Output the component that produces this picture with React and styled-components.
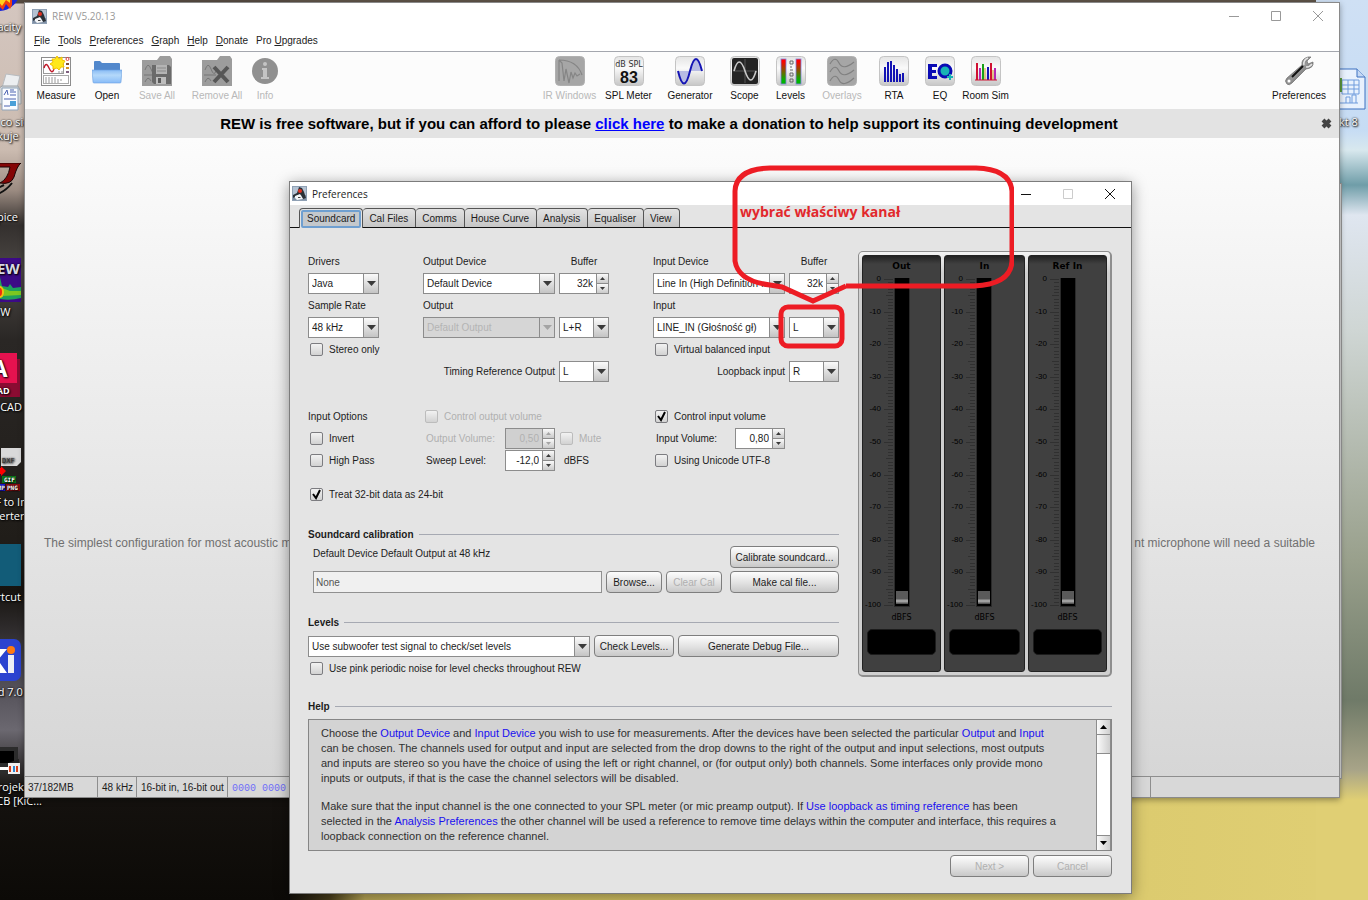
import React from 'react';
import styled, { createGlobalStyle } from 'styled-components';

const ICONS = ['Audacity', 'Drukarka', 'LTspice', 'REW', 'AutoCAD', 'DXF', 'Shortcut', 'KiCad', 'Projekt'];

const LABELS = {
  Audacity: ['Audacity'],
  Drukarka: ['Patrz, co się', 'drukuje'],
  LTspice: ['LTspice'],
  REW: ['REW'],
  AutoCAD: ['AutoCAD'],
  DXF: ['Acme DXF to Image', 'Converter'],
  Shortcut: ['Shortcut'],
  KiCad: ['KiCad 7.0'],
  Projekt: ['Nowy projektor', 'płytka PCB [KiC...'],
};

const TABS = ['Soundcard', 'Cal Files', 'Comms', 'House Curve', 'Analysis', 'Equaliser', 'View'];

function JavaIcon() {
  return (
    <svg width="15" height="15" viewBox="0 0 15 15" aria-hidden="true">
      <rect width="15" height="15" fill="#b4c2d2" />
      <rect y="9" width="15" height="6" fill="#7f8fa4" />
      <path d="M7 1 L10 2 L12 6 L14 12 L11 13 L9 9 L4 10 L1 12 L1 9 L5 7 Z" fill="#2b3036" />
      <path d="M3 10 L8 8 L11 13 L5 14 L3 12 Z" fill="#f4f6f8" />
      <path d="M6 11 L9 11 L8 12 L6 12 Z" fill="#444" />
      <circle cx="8" cy="5" r="2" fill="#e03020" />
      <rect x="0.5" y="0.5" width="14" height="14" fill="none" stroke="#8fa0b4" />
    </svg>
  );
}

function DesktopIcon({ name }) {
  return (
    <svg width="46" height="44" viewBox="0 0 46 44" aria-hidden="true">
      {name === 'Audacity' && <>
        <circle cx="23" cy="17" r="21" fill="#1a26d8" />
        <path d="M6 10 H36 V32 L34 36 L30 31 L27 37 L22 32 L14 37 Z" fill="#f2400e" />
        <path d="M10 10 H34 V30 L30 27 L26 33 L22 28 Z" fill="#ffd21c" />
      </>}
      {name === 'Drukarka' && <>
        <path d="M26 20 L30 6 L44 8 L40 24 Z" fill="#eceef0" stroke="#b8bcc0" />
        <path d="M18 24 L26 18 H42 L45 24 V36 H18 Z" fill="#d4d7da" stroke="#9aa0a4" />
        <path d="M26 20 H42 V42 H26 Z" fill="#fafcff" stroke="#8fa3b8" />
        <path d="M28 27 L31 22 L32 27 M34 22 H38 M34 24 H40 M34 27 H40 M28 31 H40 M28 38 H34" stroke="#4a62b0" fill="none" />
        <rect x="34" y="33" width="6" height="5" fill="#4aa0d8" />
      </>}
      {name === 'LTspice' && <>
        <path d="M20 0 H45 Q41 3 38 14 Q35 22 24 20 Q32 16 34 4 H20 Z" fill="#840505" stroke="#1a0505" />
        <path d="M18 32 Q28 30 36 20 M20 26 L28 22" stroke="#111" strokeWidth="2" fill="none" />
      </>}
      {name === 'REW' && <>
        <rect width="45" height="44" fill="#3c0a86" />
        <text x="11" y="16" fontFamily="Open Sans, sans-serif" fontWeight="700" fontSize="15" fill="#d8d8e4">REW</text>
        <path d="M0 32 L14 31 L20 24 L23 15 L26 28 L32 29 L34 26 L37 30 L45 29 V40 Q34 43 24 41 L0 40 Z" fill="#1fa05c" />
        <path d="M18 34 L22 24 L26 30 L34 33 L45 33 V37 L26 38 H18 Z" fill="#7cc820" />
        <ellipse cx="24" cy="34" rx="4" ry="6" fill="#f0c010" />
        <ellipse cx="24" cy="34" rx="2" ry="4" fill="#f02c10" />
      </>}
      {name === 'AutoCAD' && <>
        <rect x="4" y="6" width="40" height="38" fill="#8a0c32" />
        <rect x="2" y="0" width="39" height="30" fill="#e5124f" />
        <text x="15" y="24" fontFamily="Open Sans, sans-serif" fontWeight="700" fontSize="24" fill="#fff">A</text>
        <text x="15" y="41" fontFamily="Open Sans, sans-serif" fontWeight="700" fontSize="9" fill="#fff">CAD</text>
      </>}
      {name === 'DXF' && <>
        <path d="M25 0 H45 V14 L41 18 H25 Z" fill="#d9d9d9" />
        <text x="26" y="15" fontFamily="DejaVu Sans Mono, monospace" fontSize="7" fill="#333">DXF</text>
        <path d="M20 20 H25 V18 L30 23 L25 28 V26 H20 Z" fill="#f00" />
        <rect x="26" y="28" width="14" height="7" fill="#0a7a1a" />
        <text x="28" y="34" fontFamily="DejaVu Sans Mono, monospace" fontWeight="700" fontSize="6" fill="#fff">GIF</text>
        <rect x="12" y="36" width="17" height="7" fill="#1a1ae0" />
        <rect x="30" y="36" width="14" height="7" fill="#8a0c10" />
        <text x="18" y="42" fontFamily="DejaVu Sans Mono, monospace" fontWeight="700" fontSize="6" fill="#fff">BMP</text>
        <text x="31" y="42" fontFamily="DejaVu Sans Mono, monospace" fontWeight="700" fontSize="6" fill="#fff">PNG</text>
      </>}
      {name === 'Shortcut' && <rect y="1" width="45" height="42" fill="#125c78" />}
      {name === 'KiCad' && <>
        <rect y="1" width="45" height="42" rx="7" fill="#2b43d0" />
        <path d="M8 11 H15 V21 L23 11 H31 L22 22 L31 35 H23 L15 24 V35 H8 Z" fill="#fff" />
        <rect x="32" y="17" width="6" height="18" fill="#eceef4" />
        <circle cx="35" cy="12" r="4" fill="#ff7a10" />
      </>}
      {name === 'Projekt' && <>
        <rect y="14" width="42" height="26" fill="#2c2c2c" />
        <rect y="18" width="38" height="12" fill="#000" />
        <rect y="34" width="34" height="3" fill="#fff" />
        <rect x="32" y="30" width="12" height="11" fill="#f0f0f0" />
        <path d="M32 30 L43 26 V30 Z" fill="#222" />
        <path d="M34 33 V39 M41 33 V39" stroke="#d8401c" strokeWidth="2" />
        <path d="M38 33 V39" stroke="#2c86d0" strokeWidth="2" />
      </>}
      {name === 'Sheet' && <>
        <path d="M1 1 H37 L45 9 V41 H1 Z" fill="#e8f1fd" stroke="#3c70c0" />
        <path d="M37 1 V9 H45" fill="#c4d8f4" stroke="#3c70c0" />
        <path d="M22 12 H39 V26 H22 Z M22 17 H39 M22 21 H39 M28 12 V26 M34 12 V26 M20 35 H38 M26 35 V29 H30 V35 M32 35 V27 H36 V35" fill="none" stroke="#6f9bdc" />
        <rect x="16" y="10" width="6" height="14" fill="#5c9a40" />
      </>}
    </svg>
  );
}

function ToolIcon({ name }) {
  return (
    <svg width="30" height="30" viewBox="0 0 30 30" aria-hidden="true">
      <defs>
        <linearGradient id="tile" x1="0" y1="0" x2="0" y2="1">
          <stop offset="0" stopColor="#e4e4e4" />
          <stop offset="0.4" stopColor="#fafafa" />
          <stop offset="1" stopColor="#c6c6c6" />
        </linearGradient>
        <linearGradient id="folder" x1="0" y1="0" x2="0" y2="1">
          <stop offset="0" stopColor="#8abcf4" />
          <stop offset="0.4" stopColor="#b4d8fa" />
          <stop offset="1" stopColor="#88bcf8" />
        </linearGradient>
        <linearGradient id="meter" x1="0" y1="0" x2="0" y2="1">
          <stop offset="0.1" stopColor="#f00" />
          <stop offset="0.85" stopColor="#00b400" />
        </linearGradient>
        <linearGradient id="steel" x1="0" y1="0" x2="1" y2="1">
          <stop offset="0" stopColor="#333" />
          <stop offset="0.5" stopColor="#9a9a9a" />
          <stop offset="1" stopColor="#222" />
        </linearGradient>
      </defs>
      {['SPL Meter', 'Generator', 'Scope', 'Levels', 'RTA', 'EQ', 'Room Sim'].includes(name)
        && <rect x="0.5" y="0.5" width="29" height="29" rx="4" fill="url(#tile)" stroke="#c4c4c4" />}
      {['IR Windows', 'Overlays'].includes(name)
        && <rect x="0.5" y="0.5" width="29" height="29" rx="4" fill="#a6a6a6" stroke="#b0b0b0" />}
      {name === 'Measure' && <>
        <rect x="0.5" y="1.5" width="29" height="28" fill="#fff" stroke="#8c8c8c" />
        <rect x="2.5" y="4.5" width="20" height="13" fill="#fff" stroke="#999" />
        <rect x="2.5" y="19.5" width="25" height="8" fill="#fff" stroke="#aaa" />
        <path d="M3 12 Q5 5 8 12 T13 13" fill="none" stroke="#c01828" strokeWidth="1.4" />
        <path d="M4 22 H16 M4 24 H22 M4 26 H18 M17 16 H22" stroke="#999" strokeDasharray="2 1" />
        <circle cx="26.500" cy="3" r="1.500" fill="none" stroke="#e04040" />
        <path d="M25 8 H28" stroke="#805030" strokeWidth="2" />
        <path d="M25 12 H28" stroke="#d89020" strokeWidth="2" />
        <path d="M25 16 H28" stroke="#806080" strokeWidth="2" />
        <path d="M16 0 L18 3 L21 1 L21 4 L24 5 L22 8 L23 11 L20 11 L18 14 L16 12 L12 13 L12 10 L9 8 L12 6 L11 3 L14 3 Z" fill="#ffe81a" stroke="#f2c000" />
      </>}
      {name === 'Open' && <>
        <path d="M2 14 V6 Q2 5 3 5 H8 L10 7 H27 Q28 7 28 8 V14 Z" fill="#5288cc" />
        <path d="M0 14 H30 L29 26 Q29 27 28 27 H2 Q1 27 1 26 Z" fill="url(#folder)" stroke="#6aa0e0" strokeWidth="0.6" />
      </>}
      {(name === 'Save All' || name === 'Remove All') && <>
        <path d="M0 4 H15 L18 0 H28 L30 3 V30 H0 Z" fill="#9c9c9c" />
        <path d="M3 14 Q6 5 9 13 T14 15 M3 26 Q6 19 9 25 M2 19 H14" fill="none" stroke="#777" />
      </>}
      {name === 'Save All' && <>
        <path d="M10 9 H27 L29 11 V28 H12 L10 26 Z" fill="#6a6a6a" />
        <rect x="14" y="9" width="11" height="9" fill="#b4b4b4" />
        <path d="M15 12 H24 M15 15 H24" stroke="#8a8a8a" />
        <rect x="14" y="21" width="10" height="7" fill="#bdbdbd" />
        <rect x="16" y="22" width="3" height="5" fill="#5a5a5a" />
      </>}
      {name === 'Remove All' && <path d="M12 11 L26 26 M26 11 L12 26" stroke="#565656" strokeWidth="4" />}
      {name === 'Info' && <>
        <circle cx="15" cy="15" r="13" fill="#909090" />
        <circle cx="15" cy="8" r="2" fill="#c4c4c4" />
        <path d="M12 12 H17 V21 H19 V23 H11 V21 H13 V14 H12 Z" fill="#c4c4c4" />
      </>}
      {name === 'IR Windows' && <path d="M4 4 V25 M4 4 L7 7 L9 25 L11 13 L14 27 L16 16 L18 22 L20 17 L22 20 L25 18 M4 4 Q22 4 27 19" fill="none" stroke="#858585" strokeWidth="1.2" />}
      {name === 'SPL Meter' && <>
        <text x="15" y="11" textAnchor="middle" fontFamily="DejaVu Sans, sans-serif" fontSize="8" fill="#333">dB SPL</text>
        <text x="15" y="27" textAnchor="middle" fontFamily="Liberation Sans, sans-serif" fontWeight="700" fontSize="16" fill="#111">83</text>
      </>}
      {name === 'Generator' && <>
        <path d="M3 15 Q9 40 15 15 Z M15 15 Q21 -9 27 15 Z" fill="#b8bce4" />
        <path d="M3 15 Q9 40 15 15 Q21 -9 27 15" fill="none" stroke="#1414b4" strokeWidth="2" />
      </>}
      {name === 'Scope' && <>
        <rect x="2" y="2" width="26" height="26" rx="2" fill="#242424" />
        <path d="M3 15 H27 M15 3 V27" stroke="#555" />
        <path d="M4 15 Q9 -3 15 15 T26 15" fill="none" stroke="#c8c8c8" strokeWidth="1.6" />
      </>}
      {name === 'Levels' && <>
        <rect x="5" y="3" width="5" height="25" fill="url(#meter)" stroke="#8080e0" strokeWidth="0.8" />
        <rect x="20" y="3" width="5" height="25" fill="url(#meter)" stroke="#8080e0" strokeWidth="0.8" />
        <path d="M14 5 H17 V8 H14 Z M14 11 H16 M14 14 H17 M14 17 H17 V20 H14 Z M14 23 H17 V26 H14 Z" fill="none" stroke="#666" />
      </>}
      {name === 'Overlays' && <path d="M3 8 Q8 -1 12 7 T27 6 M3 16 Q8 7 12 15 T27 14 M3 25 Q8 16 12 24 T27 22" fill="none" stroke="#808080" strokeWidth="1.2" />}
      {name === 'RTA' && <path d="M6 26 V11 M9 26 V6 M12 26 V5 M15 26 V9 M18 26 V13 M21 26 V18 M24 26 V17" stroke="#1414b4" strokeWidth="2" />}
      {name === 'EQ' && <>
        <path d="M3 8 H12 V11 H7 V14 H11 V17 H7 V20 H12 V23 H3 Z" fill="#0a0ab4" />
        <circle cx="20" cy="15" r="6" fill="#18b4b4" stroke="#0a0ab4" strokeWidth="3" />
        <path d="M22 21 H28 M25 18 V24" stroke="#18b4b4" strokeWidth="2" />
      </>}
      {name === 'Room Sim' && <>
        <path d="M6 24 V7 M20 24 V7" stroke="#d01030" strokeWidth="2" />
        <path d="M9 24 V12 M24 24 V12" stroke="#b428b4" strokeWidth="2" />
        <path d="M12 24 V8" stroke="#18a018" strokeWidth="2" />
        <path d="M17 24 V11" stroke="#1414b4" strokeWidth="2" />
        <path d="M14 24 V12 M22 24 V14" stroke="#d8a020" strokeWidth="1" />
        <path d="M4 24 H26" stroke="#d01030" />
      </>}
      {name === 'Preferences' && <>
        <path d="M3 28 Q0 25 3 22 L18 9 Q17 3 24 1 L27 1 L23 5 L24 8 L29 6 Q30 12 22 13 L8 27 Q5 30 3 28 Z" fill="url(#steel)" stroke="#777" strokeWidth="0.8" />
        <path d="M8 21 L19 10" stroke="#111" strokeWidth="2" />
        <circle cx="5" cy="25" r="1.500" fill="#fff" />
        <path d="M20 9 Q19 4 24 2 M22 11 Q26 11 28 8" stroke="#e4e4e4" strokeWidth="1.500" fill="none" />
      </>}
    </svg>
  );
}

function Tool({ name, width, disabled }) {
  return (
    <ToolButton type="button" $width={width} disabled={disabled}>
      <ToolIcon name={name} />
      {name}
    </ToolButton>
  );
}

function WindowButtons({ dialog }) {
  return (
    <Caption $dialog={dialog}>
      <button type="button" aria-label="Minimize"><svg width="10" height="10"><path d="M0 5.500 H10" /></svg></button>
      <button type="button" aria-label="Maximize" disabled={dialog}><svg width="10" height="10"><path d="M0.500 0.500 H9.500 V9.500 H0.500 Z" /></svg></button>
      <button type="button" aria-label="Close"><svg width="10" height="10"><path d="M0 0 L10 10 M10 0 L0 10" /></svg></button>
    </Caption>
  );
}

function Combo({ label, value, disabled }) {
  return (
    <ComboBox $disabled={disabled}>
      <select aria-label={label} disabled={disabled} defaultValue={value}>
        <option>{value}</option>
      </select>
      <span><svg width="9" height="5"><path d="M0 0 H9 L4.500 5 Z" /></svg></span>
    </ComboBox>
  );
}

function Spinner({ label, value, disabled }) {
  return (
    <SpinBox $disabled={disabled}>
      <input aria-label={label} defaultValue={value} disabled={disabled} />
      <div>
        <button type="button" aria-label={`${label} up`} disabled={disabled}><svg width="5" height="3"><path d="M0 3 H5 L2.500 0 Z" /></svg></button>
        <button type="button" aria-label={`${label} down`} disabled={disabled}><svg width="5" height="3"><path d="M0 0 H5 L2.500 3 Z" /></svg></button>
      </div>
    </SpinBox>
  );
}

function Check({ children, checked, disabled }) {
  return (
    <CheckLabel $disabled={disabled}>
      <input type="checkbox" defaultChecked={checked} disabled={disabled} />
      {children}
    </CheckLabel>
  );
}

function Meter({ title }) {
  const ticks = [];
  for (let i = 0; i <= 100; i++) {
    const x = i % 10 === 0 ? 0 : i % 5 === 0 ? 2 : 4;
    ticks.push(`M${x} ${Math.round(i * 3.26) + 0.5} H9`);
  }
  return (
    <MeterColumn>
      <MeterTitle>{title}</MeterTitle>
      <MeterBody>
        <Scale>
          {[0, -10, -20, -30, -40, -50, -60, -70, -80, -90, -100].map(db => <span key={db}>{db}</span>)}
        </Scale>
        <svg width="9" height="327" aria-hidden="true">
          <path d={ticks.join(' ')} stroke="#303030" strokeWidth="1" />
        </svg>
        <Bar><i /></Bar>
      </MeterBody>
      <Unit>dBFS</Unit>
      <Readout />
    </MeterColumn>
  );
}

function SoundcardForm() {
  return (
    <Form>
      <Columns>
        <div>
          <Row>Drivers</Row>
          <Row><Combo label="Drivers" value="Java" /></Row>
          <Row>Sample Rate</Row>
          <Row><Combo label="Sample Rate" value="48 kHz" /></Row>
          <Row><Check>Stereo only</Check></Row>
        </div>
        <div>
          <PairRow><span>Output Device</span><Centered>Buffer</Centered></PairRow>
          <PairRow><Combo label="Output Device" value="Default Device" /><Spinner label="Output buffer" value="32k" /></PairRow>
          <PairRow><span>Output</span></PairRow>
          <PairRow><Combo label="Output" value="Default Output" disabled /><Combo label="Output channel" value="L+R" /></PairRow>
          <PairRow />
          <PairRow><RightText>Timing Reference Output</RightText><Combo label="Timing Reference Output" value="L" /></PairRow>
        </div>
        <div>
          <PairRow><span>Input Device</span><Centered>Buffer</Centered></PairRow>
          <PairRow><Combo label="Input Device" value="Line In (High Definition ..." /><Spinner label="Input buffer" value="32k" /></PairRow>
          <PairRow><span>Input</span></PairRow>
          <PairRow><Combo label="Input" value="LINE_IN (Głośność gł)" /><Combo label="Input channel" value="L" /></PairRow>
          <PairRow><Check>Virtual balanced input</Check></PairRow>
          <PairRow><RightText>Loopback input</RightText><Combo label="Loopback input" value="R" /></PairRow>
        </div>
      </Columns>
      <Columns $top={23}>
        <div>
          <Row>Input Options</Row>
          <Row><Check>Invert</Check></Row>
          <Row><Check>High Pass</Check></Row>
        </div>
        <div>
          <Row><Check disabled>Control output volume</Check></Row>
          <VolumeRow $disabled><span>Output Volume:</span><Spinner label="Output Volume" value="0,50" disabled /><Check disabled>Mute</Check></VolumeRow>
          <VolumeRow><span>Sweep Level:</span><Spinner label="Sweep Level" value="-12,0" /><Units>dBFS</Units></VolumeRow>
        </div>
        <div>
          <Row><Check checked>Control input volume</Check></Row>
          <VolumeRow><span>Input Volume:</span><Spinner label="Input Volume" value="0,80" /></VolumeRow>
          <Row><Check>Using Unicode UTF-8</Check></Row>
        </div>
      </Columns>
      <Row $top={12}><Check checked>Treat 32-bit data as 24-bit</Check></Row>

      <Heading $top={18}>Soundcard calibration</Heading>
      <Calibration>
        <p>Default Device Default Output at 48 kHz</p>
        <SwingButton type="button">Calibrate soundcard...</SwingButton>
        <FileRow>
          <FileField aria-label="Calibration file" readOnly value="None" />
          <SwingButton type="button">Browse...</SwingButton>
          <SwingButton type="button" disabled>Clear Cal</SwingButton>
        </FileRow>
        <SwingButton type="button">Make cal file...</SwingButton>
      </Calibration>

      <Heading $top={18}>Levels</Heading>
      <LevelsRow>
        <Combo label="Level signal" value="Use subwoofer test signal to check/set levels" />
        <SwingButton type="button">Check Levels...</SwingButton>
        <SwingButton type="button">Generate Debug File...</SwingButton>
      </LevelsRow>
      <Row><Check>Use pink periodic noise for level checks throughout REW</Check></Row>
    </Form>
  );
}

function PreferencesDialog() {
  return (
    <Dialog>
      <TitleBar $dialog>
        <JavaIcon />
        <h2>Preferences</h2>
        <WindowButtons dialog />
      </TitleBar>
      <TabBar role="tablist">
        {TABS.map((tab, i) => (
          <Tab key={tab} type="button" role="tab" aria-selected={i === 0} $active={i === 0}><span>{tab}</span></Tab>
        ))}
      </TabBar>
      <DialogBody>
        <TopArea>
          <SoundcardForm />
          <Meters>
            <Meter title="Out" />
            <Meter title="In" />
            <Meter title="Ref In" />
          </Meters>
        </TopArea>
        <Heading $top={16}>Help</Heading>
        <HelpBox>
          <HelpText>
            <p>
              Choose the <a href="#output-device">Output Device</a> and <a href="#input-device">Input Device</a> you wish to use for measurements. After the devices have been selected the particular <a href="#output">Output</a> and <a href="#input">Input</a><br />
              can be chosen. The channels used for output and input are selected from the drop downs to the right of the output and input selections, most outputs<br />
              and inputs are stereo so you have the choice of using the left or right channel, or (for output only) both channels. Some interfaces only provide mono<br />
              inputs or outputs, if that is the case the channel selectors will be disabled.
            </p>
            <p>
              Make sure that the input channel is the one connected to your SPL meter (or mic preamp output). If <a href="#loopback">Use loopback as timing reference</a> has been<br />
              selected in the <a href="#analysis">Analysis Preferences</a> the other channel will be used a reference to remove time delays within the computer and interface, this requires a<br />
              loopback connection on the reference channel.
            </p>
          </HelpText>
          <ScrollBar>
            <button type="button" aria-label="Scroll up"><svg width="7" height="4"><path d="M0 4 H7 L3.500 0 Z" /></svg></button>
            <i />
            <button type="button" aria-label="Scroll down"><svg width="7" height="4"><path d="M0 0 H7 L3.500 4 Z" /></svg></button>
          </ScrollBar>
        </HelpBox>
        <Footer>
          <SwingButton type="button" disabled>Next &gt;</SwingButton>
          <SwingButton type="button" disabled>Cancel</SwingButton>
        </Footer>
      </DialogBody>
    </Dialog>
  );
}

function MainWindow() {
  return (
    <AppWindow>
      <TitleBar>
        <JavaIcon />
        <h1>REW V5.20.13</h1>
        <WindowButtons />
      </TitleBar>
      <MenuBar>
        <a href="#file"><u>F</u>ile</a>
        <a href="#tools"><u>T</u>ools</a>
        <a href="#preferences"><u>P</u>references</a>
        <a href="#graph"><u>G</u>raph</a>
        <a href="#help"><u>H</u>elp</a>
        <a href="#donate"><u>D</u>onate</a>
        <a href="#pro">Pro <u>U</u>pgrades</a>
      </MenuBar>
      <Toolbar>
        <div>
          <Tool name="Measure" width={54} />
          <Tool name="Open" width={48} />
          <Tool name="Save All" width={52} disabled />
          <Tool name="Remove All" width={68} disabled />
          <Tool name="Info" width={28} disabled />
        </div>
        <div>
          <Tool name="IR Windows" width={58} disabled />
          <Tool name="SPL Meter" width={60} />
          <Tool name="Generator" width={63} />
          <Tool name="Scope" width={46} />
          <Tool name="Levels" width={46} />
          <Tool name="Overlays" width={57} disabled />
          <Tool name="RTA" width={47} />
          <Tool name="EQ" width={45} />
          <Tool name="Room Sim" width={46} />
        </div>
        <div>
          <Tool name="Preferences" width={58} />
        </div>
      </Toolbar>
      <Banner>
        <p>REW is free software, but if you can afford to please <a href="#donate">click here</a> to make a donation to help support its continuing development</p>
        <button type="button" aria-label="Dismiss">
          <svg width="11" height="11"><path d="M2 2 L9 9 M9 2 L2 9" stroke="#444" strokeWidth="4" /></svg>
        </button>
      </Banner>
      <Workspace>
        <span>The simplest configuration for most acoustic m</span>
        <span>nt microphone will need a suitable</span>
      </Workspace>
      <StatusBar>
        <StatusCell $width={72}>37/182MB</StatusCell>
        <StatusCell $width={39}>48 kHz</StatusCell>
        <StatusCell $width={91}>16-bit in, 16-bit out</StatusCell>
        <StatusCell $grow><code>0000 0000</code></StatusCell>
        <StatusCell $width={189} />
      </StatusBar>
    </AppWindow>
  );
}

function App() {
  return (
    <Desktop>
      <GlobalStyle />
      <IconColumn>
        {ICONS.map(name => (
          <Shortcut key={name}>
            <DesktopIcon name={name} />
            {LABELS[name].map(line => <span key={line}>{line}</span>)}
          </Shortcut>
        ))}
      </IconColumn>
      <RightIcons>
        <Shortcut>
          <DesktopIcon name="Sheet" />
          <span>Projekt 8</span>
        </Shortcut>
      </RightIcons>
      <BackWindow />
      <MainWindow />
      <PreferencesDialog />
      <Callout>
        <svg width="282" height="184" viewBox="0 0 282 184" aria-hidden="true">
          <path d="M114 121 H242 Q279 119 280 96 V26 Q278 4 244 3 H38 Q4 4 3 26 V96 Q6 116 38 120 L50 122 L81 136 L114 121" />
          <rect x="49" y="142" width="61" height="39" rx="7" />
        </svg>
        <p>wybrać właściwy kanał</p>
      </Callout>
    </Desktop>
  );
}

const GlobalStyle = createGlobalStyle`
  * {
    box-sizing: border-box;
  }
  body {
    margin: 0;
    font: 10px "Liberation Sans", Arial, sans-serif;
    color: #1c1c1c;
  }
  h1, h2, p {
    margin: 0;
  }
  button, input, select {
    font: inherit;
    color: inherit;
    padding: 0;
    margin: 0;
  }
  svg {
    display: block;
    flex: none;
  }
`;

const Desktop = styled.div`
  position: relative;
  height: 100vh;
  overflow: hidden;
  background:
    linear-gradient(180deg, #cfe0f4 0, #c6dcf4 130px, #d8e8ee 150px, #6f9da8 185px, #dfe6f0 215px, #cfd6d4 330px, #99a08c 560px, #6f7a68 700px, #a8a488 770px, #e0cf74 800px, #e0cf74 100%) right top / 52px 100% no-repeat,
    linear-gradient(180deg, #554a40 0, #554a40 3px, #d4c6bf 4px, #cbbbb0 150px, #9c8c82 190px, #34302e 225px, #4b4744 270px, #2a2725 340px, #201d19 540px, #16130f 590px, #55525a 690px, #6b6870 730px, #15120f 790px, #0c0a07 100%) left top / 290px 100% no-repeat,
    linear-gradient(#5e5348, #5e5348) left top / 100% 4px no-repeat,
    linear-gradient(90deg, #14100a 290px, #4a3f1c 330px, #b8a656 365px, #d0bf60 480px, #e0cf74 100%);
`;

const IconColumn = styled.div`
  position: absolute;
  left: -40px;
  top: -27px;
  width: 78px;
`;

const Shortcut = styled.div`
  display: flex;
  flex-direction: column;
  align-items: center;
  height: 95px;
  font: 11px/14px "Open Sans", sans-serif;
  color: #fff;
  text-shadow: 1px 1px 2px #000, 0 0 2px #000;
  white-space: nowrap;
  svg {
    margin-bottom: 3px;
  }
`;

const RightIcons = styled.div`
  position: absolute;
  right: -6px;
  top: 68px;
  width: 78px;
  svg {
    margin-left: 16px;
  }
`;

const BackWindow = styled.div`
  position: absolute;
  top: 183px;
  right: 26px;
  bottom: 121px;
  width: 40px;
  background: #dcdcdc;
  border: 1px solid #999;
`;

const AppWindow = styled.section`
  position: absolute;
  top: 2px;
  left: 24px;
  right: 28px;
  bottom: 102px;
  display: flex;
  flex-direction: column;
  background: #fff;
  border: 1px solid #8a8a8a;
  box-shadow: 0 2px 6px rgba(0, 0, 0, 0.35);
`;

const TitleBar = styled.header`
  display: flex;
  align-items: center;
  height: ${props => (props.$dialog ? 23 : 26)}px;
  padding-left: ${props => (props.$dialog ? 2 : 7)}px;
  background: #fff;
  h1, h2 {
    flex: 1;
    margin-left: 5px;
    font: 10px "Open Sans", sans-serif;
    color: ${props => (props.$dialog ? '#1c1c1c' : '#999')};
  }
`;

const Caption = styled.div`
  display: flex;
  button {
    display: flex;
    align-items: center;
    justify-content: center;
    width: 42px;
    height: 22px;
    background: none;
    border: 0;
  }
  path {
    fill: none;
    stroke: ${props => (props.$dialog ? '#111' : '#999')};
  }
  button:disabled path {
    stroke: #ccc;
  }
`;

const MenuBar = styled.nav`
  display: flex;
  align-items: center;
  gap: 8px;
  height: 23px;
  padding-left: 9px;
  border-bottom: 1px solid #a4a7ae;
  a {
    color: #222;
    text-decoration: none;
  }
`;

const Toolbar = styled.div`
  display: flex;
  justify-content: space-between;
  height: 57px;
  padding: 4px 11px 0 4px;
  background: #fcfcfc;
  > div {
    display: flex;
    align-items: flex-start;
  }
`;

const ToolButton = styled.button`
  display: flex;
  flex-direction: column;
  align-items: center;
  gap: 4px;
  width: ${props => props.$width}px;
  background: none;
  border: 0;
  line-height: 12px;
  white-space: nowrap;
  color: #111;
  &:disabled {
    color: #b8b8b8;
  }
`;

const Banner = styled.div`
  display: flex;
  align-items: center;
  height: 29px;
  padding-right: 7px;
  background: #e3e3e3;
  p {
    flex: 1;
    padding-right: 8px;
    text-align: center;
    font-size: 15px;
    font-weight: bold;
    color: #000;
  }
  a {
    color: #00f;
  }
  button {
    background: none;
    border: 0;
  }
`;

const Workspace = styled.main`
  flex: 1;
  display: flex;
  align-items: center;
  justify-content: space-between;
  padding: 172px 24px 0 19px;
  font-size: 12px;
  color: #707070;
  background: linear-gradient(#fcfcfc, #f4f4f4 20%, #d6d6d6);
`;

const StatusBar = styled.footer`
  display: flex;
  height: 21px;
  border-top: 1px solid #8e8e8e;
  background: #d8d8d8;
`;

const StatusCell = styled.div`
  flex: ${props => (props.$grow ? '1' : 'none')};
  width: ${props => (props.$grow ? 'auto' : `${props.$width}px`)};
  padding-left: 4px;
  line-height: 21px;
  border-left: 1px solid #8e8e8e;
  white-space: nowrap;
  &:first-child {
    padding-left: 3px;
    border-left: 0;
  }
  code {
    font: 10px "Liberation Mono", monospace;
    color: #6e6ef8;
  }
`;

const Dialog = styled.section`
  position: absolute;
  top: 181px;
  left: 289px;
  right: 236px;
  border: 1px solid #7c7c7c;
  background: #e4e4e4;
  box-shadow: 0 3px 14px rgba(0, 0, 0, 0.4);
`;

const TabBar = styled.div`
  display: flex;
  align-items: flex-end;
  height: 23px;
  padding-left: 9px;
  box-shadow: inset 0 -1px #111;
`;

const Tab = styled.button`
  height: ${props => (props.$active ? 20 : 19)}px;
  margin-bottom: ${props => (props.$active ? 0 : 1)}px;
  padding: 1px ${props => (props.$active ? '1px 0 1px' : '7px 0 6px')};
  border: 1px solid #555;
  border-bottom: 0;
  border-left-width: ${props => (props.$active ? 1 : 0)}px;
  border-radius: 4px 4px 0 0;
  background: ${props => (props.$active ? '#e4e4e4' : 'linear-gradient(#e2e2e2, #c6c6c6)')};
  white-space: nowrap;
  span {
    display: block;
    padding: 0 ${props => (props.$active ? 4 : 0)}px;
    line-height: ${props => (props.$active ? 14 : 16)}px;
    border: ${props => (props.$active ? '2px solid #6f9fd0' : '0')};
    border-radius: 2px;
    background: ${props => (props.$active ? '#c4c8cc' : 'none')};
  }
`;

const DialogBody = styled.div`
  padding: 22px 19px 16px 18px;
`;

const TopArea = styled.div`
  display: flex;
  align-items: flex-start;
  gap: 19px;
`;

const Form = styled.form`
  flex: 1;
  min-width: 0;
`;

const Columns = styled.div`
  display: grid;
  grid-template-columns: 71px 1fr 1fr;
  gap: 44px;
  margin-top: ${props => props.$top || 0}px;
`;

const Row = styled.div`
  display: flex;
  align-items: center;
  height: 22px;
  margin-top: ${props => props.$top || 0}px;
  white-space: nowrap;
`;

const PairRow = styled.div`
  display: grid;
  grid-template-columns: 1fr 50px;
  align-items: center;
  gap: 4px;
  height: 22px;
  white-space: nowrap;
`;

const VolumeRow = styled.div`
  display: grid;
  grid-template-columns: 79px 50px 1fr;
  align-items: center;
  gap: 3px;
  height: 22px;
  white-space: nowrap;
  color: ${props => (props.$disabled ? '#b0b0b0' : 'inherit')};
  > span:first-child {
    padding-left: 3px;
  }
`;

const Units = styled.span`
  padding-left: 6px;
`;

const Centered = styled.span`
  text-align: center;
`;

const RightText = styled.span`
  text-align: right;
`;

const ComboBox = styled.div`
  display: grid;
  width: 100%;
  height: 21px;
  select {
    grid-area: 1 / 1;
    appearance: none;
    min-width: 0;
    padding: 0 18px 0 3px;
    border: 1px solid #8c8c8c;
    border-radius: 0;
    background: ${props => (props.$disabled ? '#d6d6d6' : '#fff')};
    opacity: 1;
    color: ${props => (props.$disabled ? '#b4b4b4' : '#1c1c1c')};
  }
  > span {
    grid-area: 1 / 1;
    justify-self: end;
    display: flex;
    align-items: center;
    justify-content: center;
    width: 16px;
    border: 1px solid #8c8c8c;
    background: ${props => (props.$disabled ? '#d6d6d6' : 'linear-gradient(#fafafa, #c4c4c4)')};
    pointer-events: none;
  }
  path {
    fill: ${props => (props.$disabled ? '#a4a4a4' : '#3a3a3a')};
  }
`;

const SpinBox = styled.div`
  display: flex;
  height: 21px;
  border: 1px solid #8c8c8c;
  input {
    flex: 1;
    min-width: 0;
    padding-right: 3px;
    border: 0;
    text-align: right;
    background: ${props => (props.$disabled ? '#d0d0d0' : '#fff')};
    color: ${props => (props.$disabled ? '#b0b0b0' : '#1c1c1c')};
  }
  > div {
    display: flex;
    flex-direction: column;
    width: 12px;
    border-left: 1px solid #8c8c8c;
  }
  button {
    flex: 1;
    display: flex;
    align-items: center;
    justify-content: center;
    border: 0;
    background: linear-gradient(#fafafa, #cacaca);
  }
  button + button {
    border-top: 1px solid #8c8c8c;
  }
  path {
    fill: ${props => (props.$disabled ? '#a4a4a4' : '#3a3a3a')};
  }
`;

const CheckLabel = styled.label`
  display: flex;
  align-items: center;
  gap: 6px;
  padding-left: 2px;
  color: ${props => (props.$disabled ? '#b0b0b0' : 'inherit')};
  input {
    appearance: none;
    width: 13px;
    height: 13px;
    border: 1px solid ${props => (props.$disabled ? '#bcbcbc' : '#7c7c80')};
    border-radius: 2px;
    background: linear-gradient(#f2f2f2, #d2d2d2);
  }
  input:checked {
    background: url('data:image/svg+xml,<svg xmlns="http://www.w3.org/2000/svg" width="11" height="11"><path d="M2 5 L5 9 L9 1" fill="none" stroke="black" stroke-width="2"/></svg>') no-repeat center, linear-gradient(#f2f2f2, #d2d2d2);
  }
`;

const SwingButton = styled.button`
  height: 22px;
  border: 1px solid #7e7e7e;
  border-radius: 4px;
  background: linear-gradient(#fdfdfd, #e4e4e4 50%, #c8c8c8);
  white-space: nowrap;
  &:disabled {
    color: #b0b0b0;
  }
`;

const Heading = styled.h2`
  display: flex;
  align-items: center;
  gap: 5px;
  height: 22px;
  margin-top: ${props => props.$top}px;
  font-size: 10px;
  &::after {
    content: "";
    flex: 1;
    height: 1px;
    background: #a6a9b2;
  }
`;

const Calibration = styled.div`
  display: grid;
  grid-template-columns: 1fr 109px;
  gap: 3px 8px;
  padding: 1px 0 0 5px;
  p {
    line-height: 16px;
  }
`;

const FileRow = styled.div`
  display: grid;
  grid-template-columns: 1fr 56px 56px;
  gap: 4px;
`;

const FileField = styled.input`
  min-width: 0;
  border: 1px solid #909090;
  padding-left: 2px;
  background: #f0f0f0;
  color: #555;
`;

const LevelsRow = styled.div`
  display: grid;
  grid-template-columns: 282px 80px 1fr;
  align-items: center;
  gap: 4px;
  padding-top: 2px;
`;

const Meters = styled.div`
  display: grid;
  grid-template-columns: 79px 81px 79px;
  gap: 3px;
  margin-top: 1px;
  padding: 3px;
  border: 1px solid #8e8e8e;
  border-right-width: 2px;
  border-bottom-width: 2px;
  border-radius: 5px;
  background: linear-gradient(#f4f4f4, #cfcfcf 5%, #cfcfcf);
`;

const MeterColumn = styled.div`
  display: flex;
  flex-direction: column;
  height: 417px;
  border: 1px solid #222;
  border-radius: 3px;
  background: linear-gradient(#222, #404040 8px);
  color: #000;
`;

const MeterTitle = styled.div`
  height: 18px;
  text-align: center;
  font: bold 9px/20px "DejaVu Sans", sans-serif;
`;

const MeterBody = styled.div`
  display: flex;
  align-items: center;
  height: 336px;
`;

const Scale = styled.div`
  display: flex;
  flex-direction: column;
  justify-content: space-between;
  width: 18px;
  height: 336px;
  margin-right: 3px;
  text-align: right;
  font: 8px/10px "Liberation Sans", sans-serif;
`;

const Bar = styled.div`
  display: flex;
  align-items: flex-end;
  width: 16px;
  height: 329px;
  margin-left: 1px;
  padding: 0 1px 2px;
  background: #000;
  border: 1px solid #2a2a2a;
  border-top: 0;
  i {
    flex: 1;
    height: 13px;
    background: linear-gradient(#5a5a5a 0 8px, #a0a0a0 9px 11px, #555 12px);
  }
`;

const Unit = styled.div`
  text-align: center;
  font: 8px/15px "DejaVu Sans", sans-serif;
`;

const Readout = styled.div`
  height: 26px;
  margin: 4px;
  border: 1px solid #1c1c1c;
  border-radius: 5px;
  background: #000;
`;

const HelpBox = styled.div`
  display: flex;
  height: 132px;
  margin-top: 2px;
  border: 1px solid #868686;
  background: #d3d3d3;
`;

const HelpText = styled.div`
  flex: 1;
  min-width: 0;
  padding: 6px 0 0 12px;
  font-size: 11px;
  line-height: 15px;
  color: #303030;
  white-space: nowrap;
  overflow: hidden;
  p + p {
    margin-top: 13px;
  }
  a {
    color: #1a10f0;
    text-decoration: none;
  }
`;

const ScrollBar = styled.div`
  display: flex;
  flex-direction: column;
  width: 15px;
  border: 1px solid #8c8c8c;
  border-width: 0 1px;
  background: #fff;
  button {
    display: flex;
    align-items: center;
    justify-content: center;
    height: 15px;
    border: 0;
    border-bottom: 1px solid #8c8c8c;
    background: linear-gradient(90deg, #fafafa, #cfcfcf);
  }
  button:last-child {
    margin-top: auto;
    border-top: 1px solid #8c8c8c;
    border-bottom: 0;
  }
  i {
    height: 19px;
    border-bottom: 1px solid #8c8c8c;
    background: linear-gradient(90deg, #fafafa, #cfcfcf);
  }
`;

const Footer = styled.div`
  display: flex;
  justify-content: flex-end;
  gap: 4px;
  margin-top: 4px;
  button {
    width: 79px;
  }
`;

const Callout = styled.div`
  position: absolute;
  left: 732px;
  top: 165px;
  pointer-events: none;
  path, rect {
    fill: none;
    stroke: #ed1c24;
    stroke-width: 5;
  }
  p {
    position: absolute;
    left: 8px;
    top: 38px;
    font: bold 14px/18px "Open Sans", sans-serif;
    color: #e2282c;
    white-space: nowrap;
  }
`;

export default App;
